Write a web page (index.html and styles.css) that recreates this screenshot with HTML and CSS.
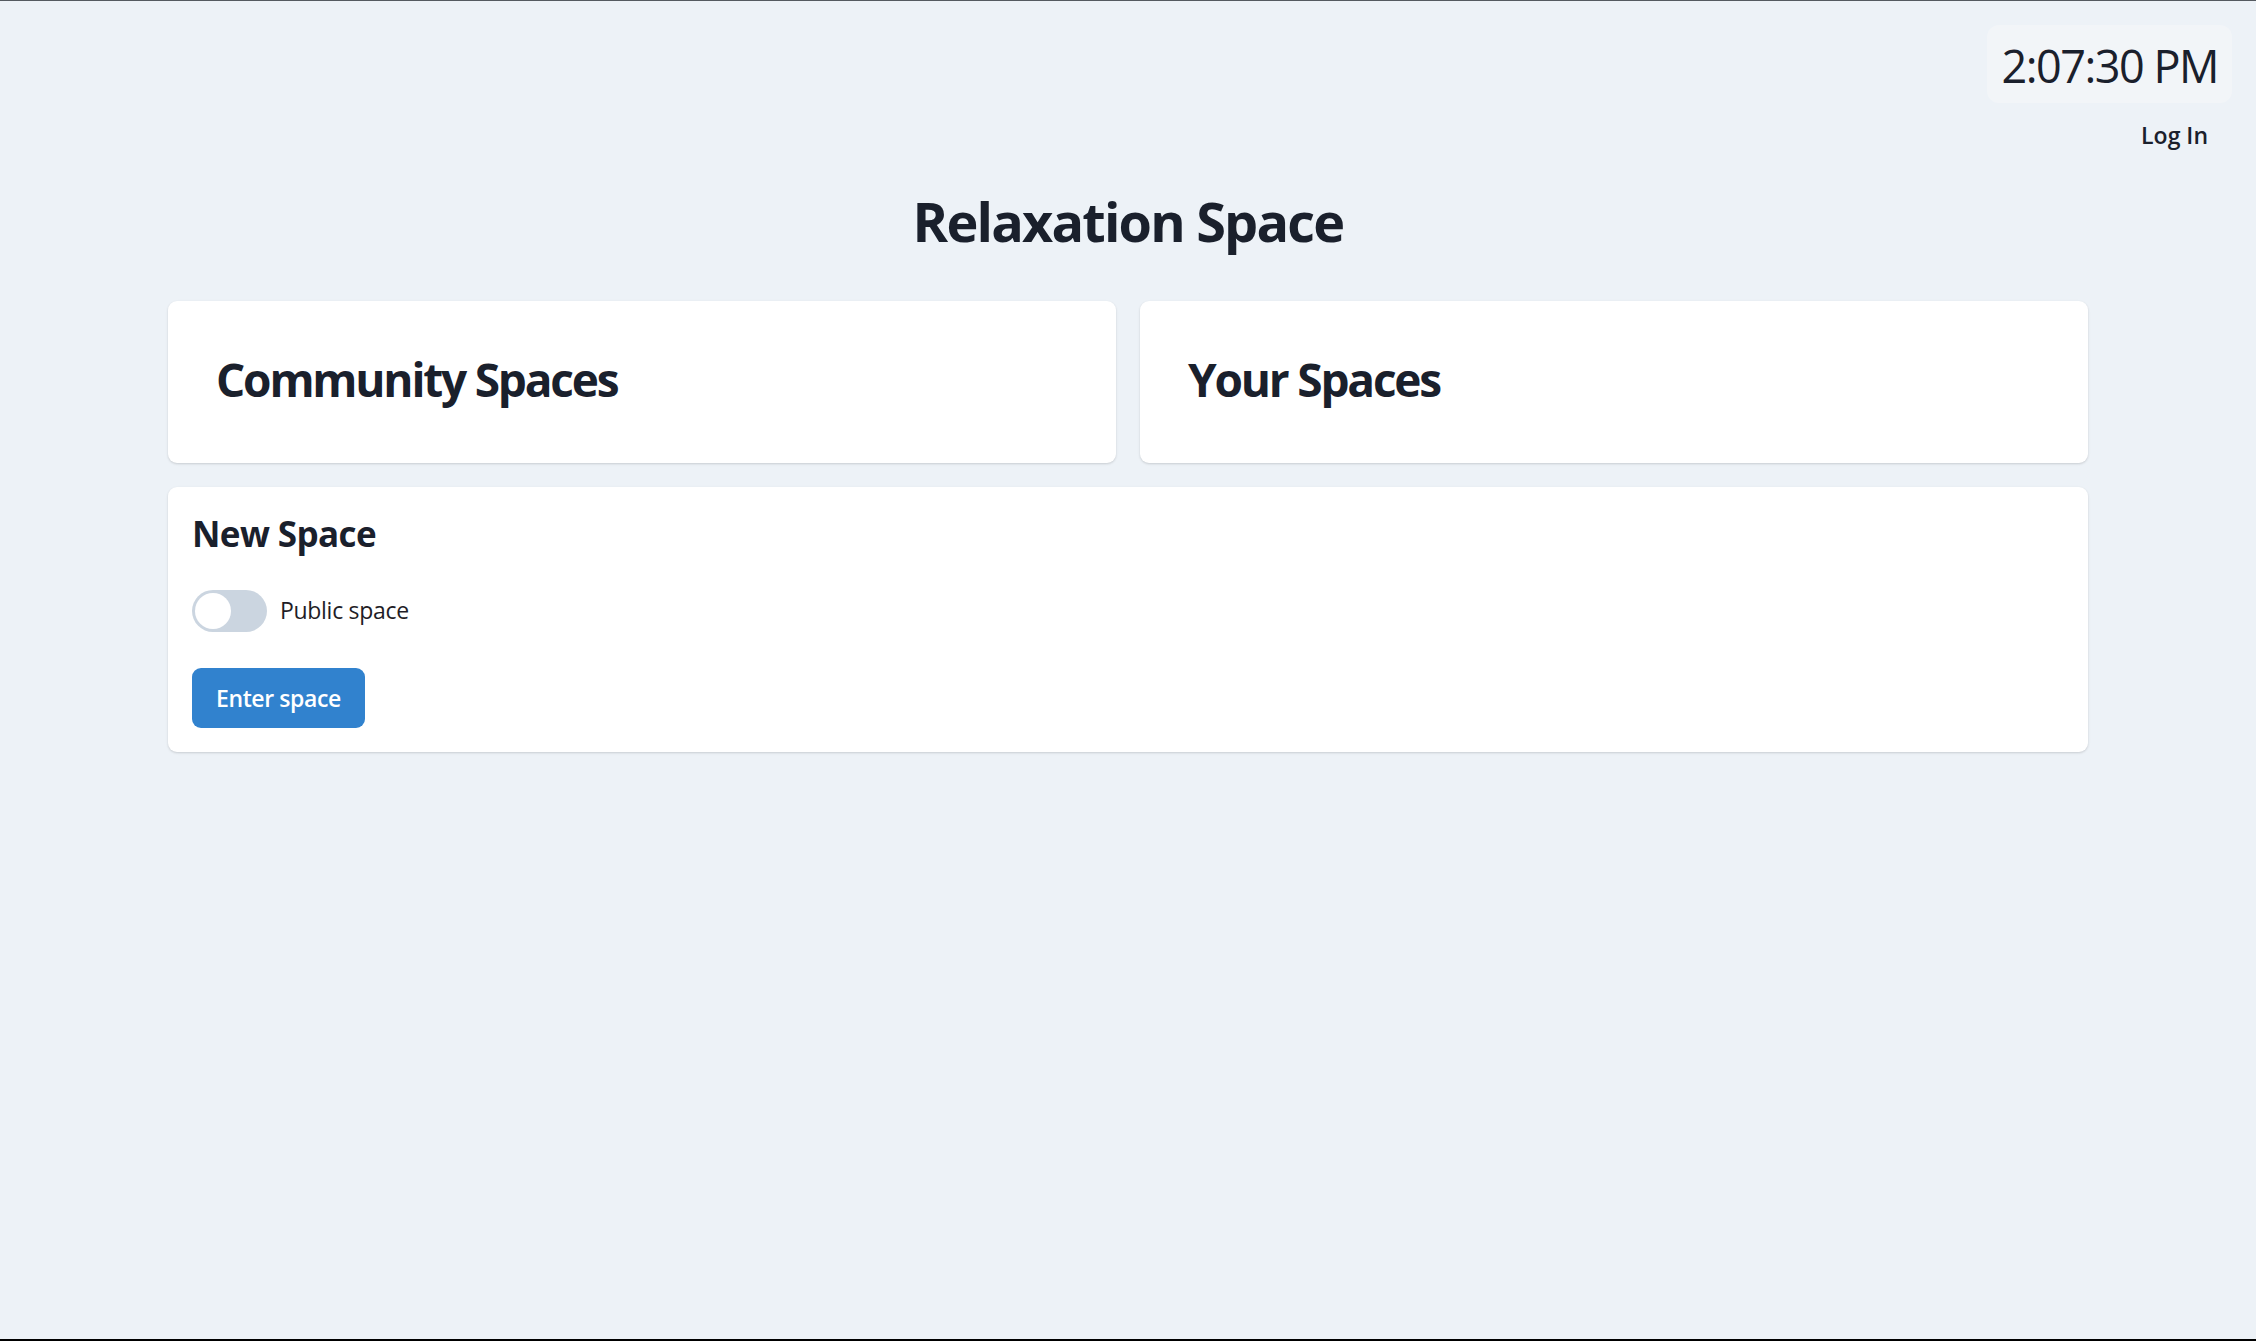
FILE: index.html
```html
<!DOCTYPE html>
<html lang="en">
<head>
<meta charset="utf-8">
<title>Relaxation Space</title>
<link rel="stylesheet" href="styles.css">
</head>
<body>
<div class="page">
  <header class="topbar">
    <div class="clock">2:07:30 PM</div>
    <button class="login" type="button">Log In</button>
  </header>
  <main class="container">
    <h1 class="title">Relaxation Space</h1>
    <div class="grid">
      <section class="card card-big">
        <h2 class="card-title">Community Spaces</h2>
      </section>
      <section class="card card-big">
        <h2 class="card-title">Your Spaces</h2>
      </section>
    </div>
    <section class="card card-new">
      <h3 class="new-title">New Space</h3>
      <label class="toggle-row">
        <span class="switch"><span class="knob"></span></span>
        <span class="toggle-label">Public space</span>
      </label>
      <button class="primary" type="button">Enter space</button>
    </section>
  </main>
</div>
</body>
</html>
```
FILE: styles.css
```css
* { box-sizing: border-box; }
html, body { margin: 0; padding: 0; }
body {
  background: #edf2f7;
  color: #1a202c;
  font-family: "Open Sans", "Noto Sans", sans-serif;
}
.page {
  min-height: 1341px;
  border-top: 1px solid #555a60;
  border-bottom: 2px solid #000;
}
.topbar {
  display: flex;
  flex-direction: column;
  align-items: flex-end;
  padding: 24px 24px 0 0;
}
.clock {
  background: #f2f5f8;
  border-radius: 12px;
  font-size: 45px;
  line-height: 64px;
  padding: 9px 14px 5px;
  letter-spacing: -1.5px;
}
.login {
  background: transparent;
  border: 0;
  height: 60px;
  padding: 3px 24px 0;
  font-family: inherit;
  font-size: 23px;
  font-weight: 600;
  color: #1a202c;
}
.container {
  width: 1920px;
  margin: 0 auto;
}
.title {
  margin: 25px 0 46px;
  text-align: center;
  font-size: 54px;
  line-height: 67px;
  font-weight: 700;
  letter-spacing: -1.8px;
}
.grid {
  display: grid;
  grid-template-columns: 1fr 1fr;
  gap: 24px;
  margin-bottom: 24px;
}
.card {
  background: #fff;
  border-radius: 9px;
  box-shadow: 0 1px 3px rgba(0,0,0,0.1), 0 1px 2px rgba(0,0,0,0.06);
}
.card-big {
  padding: 45px 48px 51px 48px;
}
.card-title {
  margin: 0;
  font-size: 46px;
  line-height: 66px;
  font-weight: 700;
  letter-spacing: -2.2px;
}
.card-new {
  padding: 25px 24px 24px;
  display: flex;
  flex-direction: column;
  align-items: flex-start;
}
.new-title {
  margin: 0 0 35px;
  font-size: 35px;
  line-height: 43px;
  font-weight: 700;
  letter-spacing: -0.6px;
}
.toggle-row {
  display: flex;
  align-items: center;
  gap: 13px;
  margin-bottom: 36px;
}
.switch {
  width: 75px;
  height: 42px;
  border-radius: 21px;
  background: #cbd5e0;
  padding: 3px;
  display: flex;
}
.knob {
  width: 36px;
  height: 36px;
  border-radius: 50%;
  background: #fff;
}
.toggle-label {
  font-size: 23px;
  line-height: 34px;
  color: #1f1d26;
  letter-spacing: -0.3px;
  padding-bottom: 2px;
}
.primary {
  background: #3182ce;
  color: #fff;
  border: 0;
  border-radius: 9px;
  height: 60px;
  padding: 0 24px;
  font-family: inherit;
  font-size: 23px;
  font-weight: 600;
  letter-spacing: -0.4px;
}
```
